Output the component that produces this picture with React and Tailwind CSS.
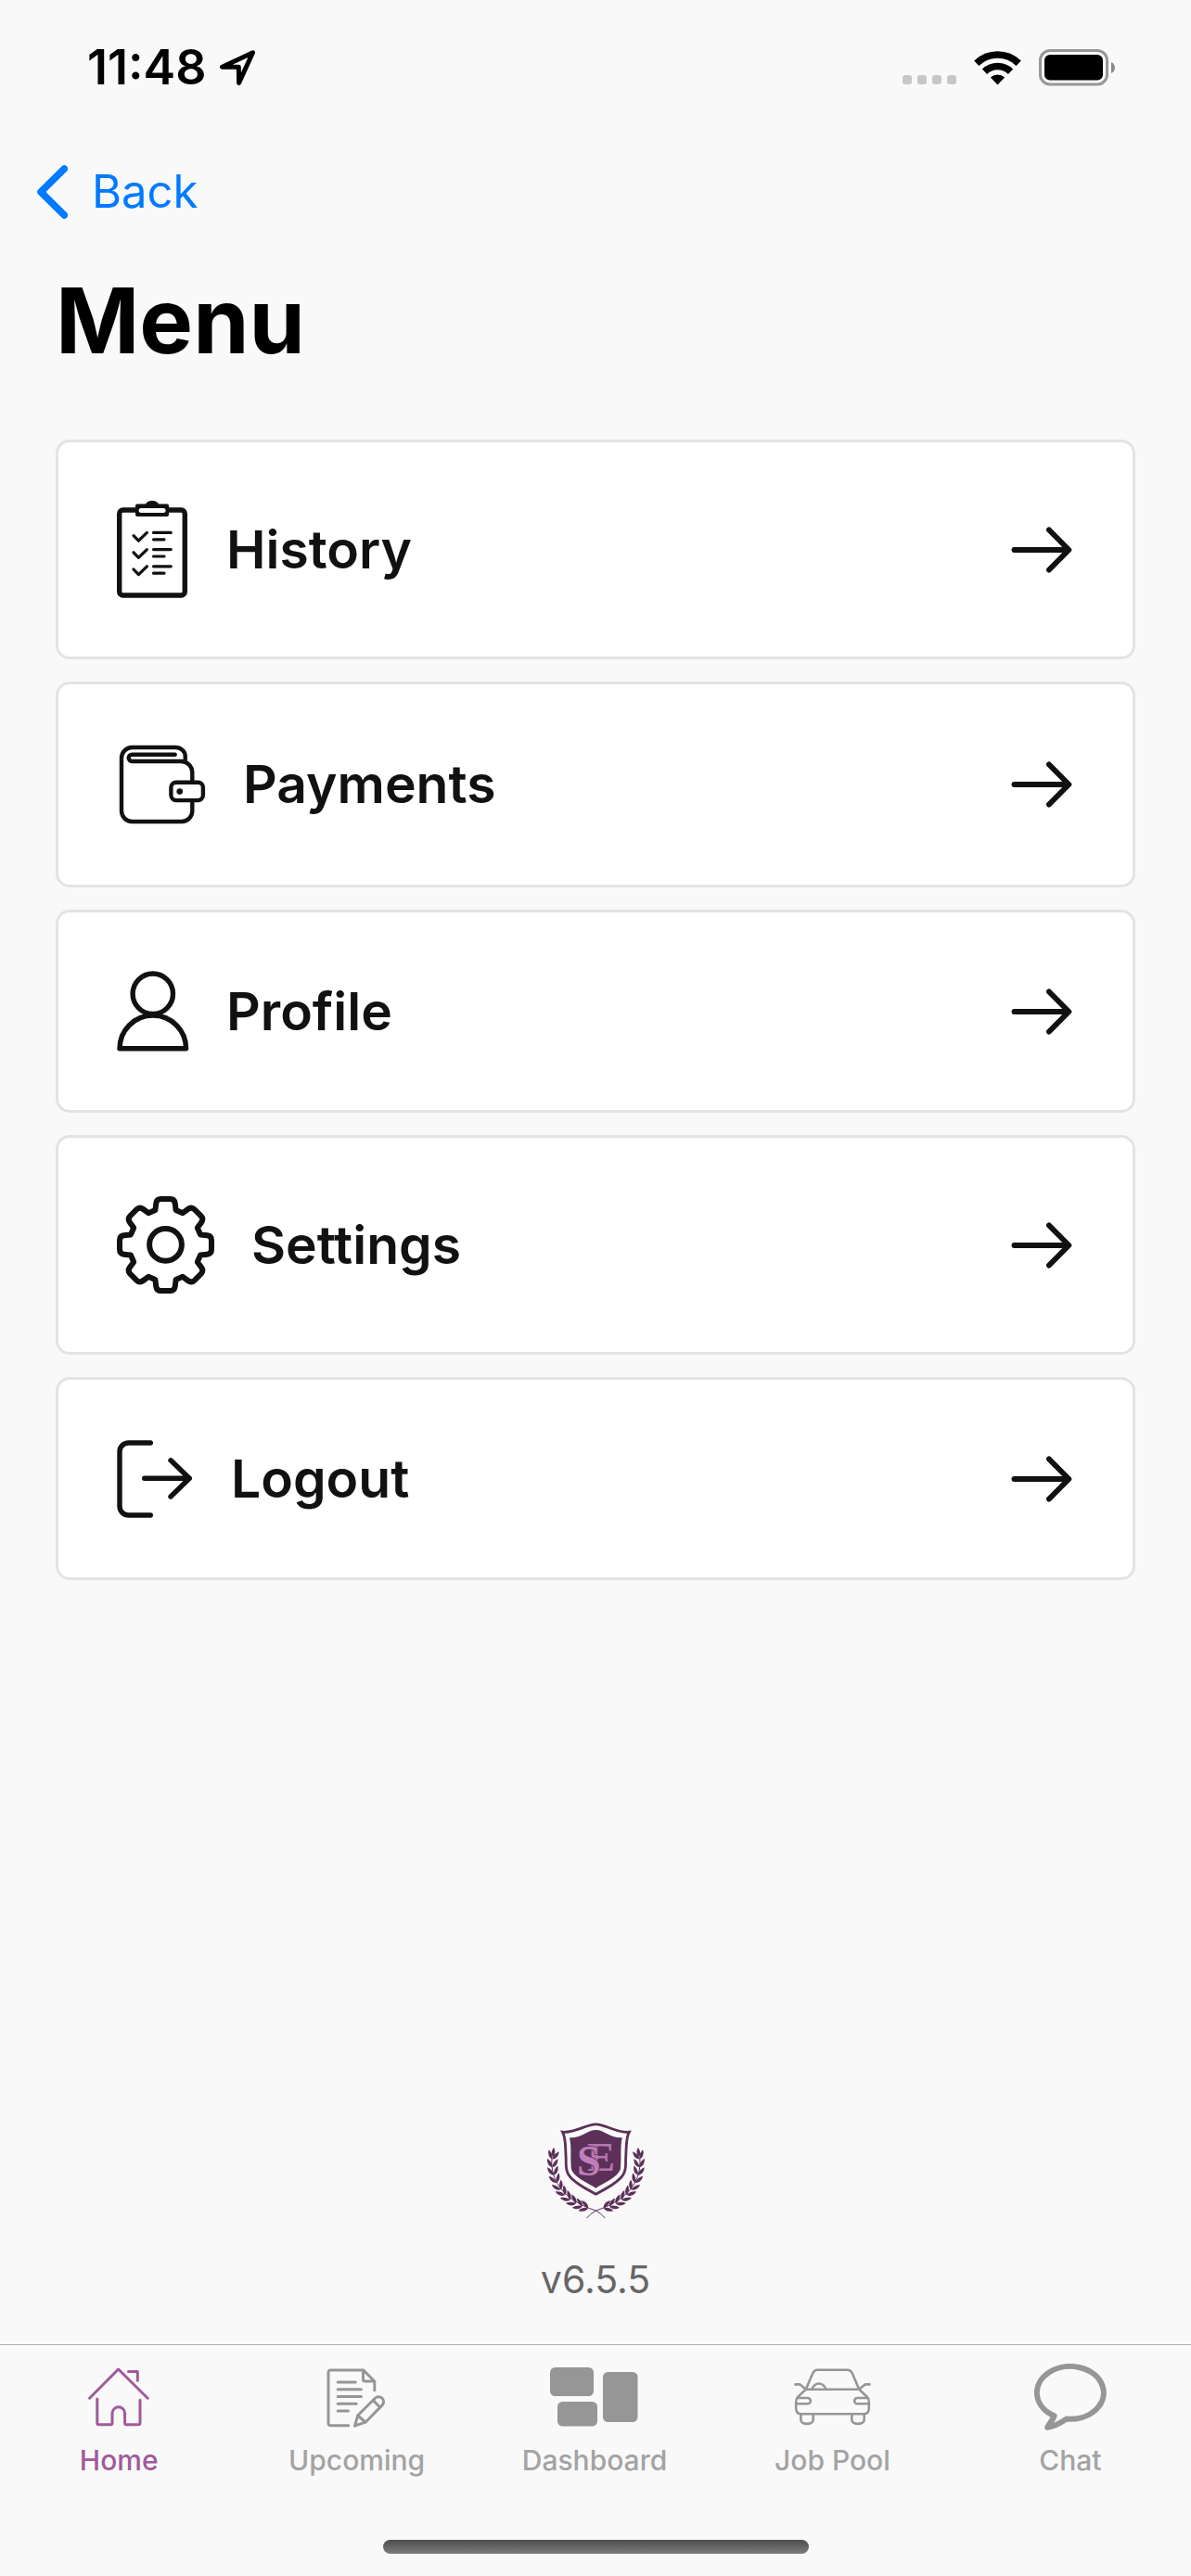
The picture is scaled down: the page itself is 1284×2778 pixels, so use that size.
import { useState } from 'react';

const menuItems = [
  { label: 'History', icon: HistoryIcon },
  { label: 'Payments', icon: PaymentsIcon },
  { label: 'Profile', icon: ProfileIcon },
  { label: 'Settings', icon: SettingsIcon },
  { label: 'Logout', icon: LogoutIcon },
];

const tabs = [
  { label: 'Home', icon: HomeIcon },
  { label: 'Upcoming', icon: UpcomingIcon },
  { label: 'Dashboard', icon: DashboardIcon },
  { label: 'Job Pool', icon: CarIcon },
  { label: 'Chat', icon: ChatIcon },
];

const line = {
  fill: 'none',
  stroke: 'currentColor',
  strokeLinecap: 'round',
  strokeLinejoin: 'round',
};

function HistoryIcon() {
  return (
    <svg width="78" height="105" viewBox="0 0 78 105" {...line} strokeWidth="5.4">
      <rect x="2.7" y="10" width="70.6" height="92" rx="4" />
      <ellipse cx="38" cy="5" rx="7.3" ry="5" fill="currentColor" stroke="none" />
      <rect x="20" y="3.5" width="36" height="13.5" rx="2" fill="currentColor" stroke="none" />
      <rect x="23.6" y="8" width="29" height="5" rx="2.5" fill="#fff" stroke="none" />
      {[0, 18.2, 36.4].map((y) => (
        <g key={y} transform={`translate(0 ${y})`} strokeWidth="3.2">
          <path d="M18 37.6l5.4 5.6 9-8.8" />
          <path d="M39.5 34.4h18.8M39.5 41.8h11.5" />
        </g>
      ))}
    </svg>
  );
}

function PaymentsIcon() {
  return (
    <svg width="96" height="90" viewBox="0 0 96 90" {...line} strokeWidth="4.4">
      <path d="M73.7 18.5V14.5C73.7 9 68.5 5 63 5H16.500A11.5 11.5 0 0 0 5 16.500v57A11.5 11.5 0 0 0 16.5 85h53.3a11.5 11.5 0 0 0 11.5-11.5V62.5" />
      <path d="M62.7 12.7H16.3a3.65 3.65 0 0 0 0 7.3h53.5c6.5.6 11.5 5.5 11.5 12v10" />
      <rect x="58.4" y="42.7" width="34.5" height="19.4" rx="5.5" />
      <circle cx="67.7" cy="52.6" r="3.3" fill="currentColor" stroke="none" />
    </svg>
  );
}

function ProfileIcon() {
  return (
    <svg width="78" height="87" viewBox="0 0 78 87" {...line} strokeWidth="5.4">
      <circle cx="38.8" cy="24.7" r="21.7" />
      <path d="M3 83.8a35.8 35.8 0 0 1 71.6 0z" />
    </svg>
  );
}

function SettingsIcon() {
  return (
    <svg width="105" height="105" viewBox="0 0 105 105" {...line} strokeWidth="6">
      {[0, 90, 180, 270].map((turn) => (
        <path
          key={turn}
          transform={`rotate(${turn} 52.5 52.5)`}
          d="M52.5 3h5c3 0 4.8 1.5 5.2 4.5l.9 7.5 7.4 3.2 5.6-4.2c2.4-1.8 4.9-1.8 7 .2l7.2 7.2c2 2.1 2 4.6.2 7l-4.2 5.6 3.2 7.4 7.5.9c3 .4 4.5 2.2 4.5 5.2v5"
        />
      ))}
      <circle cx="52.5" cy="52.3" r="17.4" />
    </svg>
  );
}

function LogoutIcon() {
  return (
    <svg width="83" height="87" viewBox="0 0 83 87" {...line} strokeWidth="5.4">
      <path d="M36.3 5H12.5A9.5 9.5 0 0 0 3 14.5v59A9.5 9.5 0 0 0 12.5 83h23.8" />
      <path d="M29.7 43.3h48.6M58 23.8l20.2 19.5L58 63" />
    </svg>
  );
}

function ArrowIcon() {
  return (
    <svg width="66" height="50" viewBox="0 0 66 50" {...line} strokeWidth="6">
      <path d="M3.5 25h58.5M41 3.5L62.3 25 41 46.5" />
    </svg>
  );
}

function HomeIcon() {
  return (
    <svg width="66" height="64" viewBox="0 0 66 64" {...line} strokeWidth="3">
      <path d="M1.6 33.2L32.6 2l31.6 31.2" />
      <path d="M9.8 34v26a1.7 1.7 0 0 0 1.7 1.7h12.8a1.7 1.7 0 0 0 1.7-1.7V49.5a6.8 6.8 0 0 1 13.6 0V60a1.7 1.7 0 0 0 1.7 1.7H54a2 2 0 0 0 2-2V35.3" />
      <path d="M43.5 4.4h9.8v9.8" />
    </svg>
  );
}

function UpcomingIcon() {
  return (
    <svg width="66" height="65" viewBox="0 0 66 65" {...line} strokeWidth="3">
      <path d="M23.7 62.7H4.2A2.2 2.2 0 0 1 2 60.5V5.2A2.2 2.2 0 0 1 4.2 3h35.6l12 12v9.7" />
      <path d="M39.5 3v10a2 2 0 0 0 2 2h10" />
      <path d="M12.2 16h19M12.2 23.7h25.2M12.2 31.4h25.2M12.2 39.2h20M12.2 47h11.2" />
      <path d="M30.4 63.2l3.4-11.4 18.6-18.5a5.3 5.3 0 0 1 7.6 7.6L42 59.2z" />
      <path d="M50.4 35.6l7.4 7.6M33.8 52l8 7" />
    </svg>
  );
}

function DashboardIcon() {
  return (
    <svg width="95" height="64" viewBox="0 0 95 64" fill="currentColor">
      <rect x="0" y="0" width="47" height="31" rx="5.5" />
      <rect x="8" y="37" width="43" height="26.5" rx="5.5" />
      <rect x="57" y="5" width="37.5" height="54" rx="5.5" />
    </svg>
  );
}

function CarIcon() {
  return (
    <svg width="83" height="62" viewBox="0 0 83 62" {...line} strokeWidth="2.6">
      <path d="M12.8 22.8l7-16.6C21.2 3 23 1.8 25.5 1.8h32c2.5 0 4.3 1.2 5.7 4.4l7 16.6z" />
      <path d="M12.8 22.8l-8.3 7.7C3 32 2.2 33.3 2.2 36v7.3c0 3.8 2 6 5.8 6h67c3.8 0 5.8-2.2 5.8-6V36c0-2.7-.8-4-2.3-5.5l-8.3-7.7" />
      <path d="M1.5 17.4h5L12 22M81.5 17.4h-5L71 22" />
      <path d="M19.5 22.3c3-7.8 11.5-7.8 14.8 0" />
      <path d="M3.5 32h11.2a3.1 3.1 0 0 1 0 6.3H2.5M79.5 32H68.3a3.1 3.1 0 0 0 0 6.3h12.2" />
      <path d="M7.3 49.5v6c0 5.8 13.4 5.8 13.4 0v-6M62.3 49.5v6c0 5.8 13.4 5.8 13.4 0v-6" />
    </svg>
  );
}

function ChatIcon() {
  return (
    <svg width="78" height="72" viewBox="0 0 78 72" {...line} strokeWidth="6">
      <path d="M35 59.6A36 28.4 0 1 0 21.6 56.3c-1 4-5.6 8.4-7.4 12.4 6-.4 14.4-4.8 20.8-9.1z" />
    </svg>
  );
}

// Leaves sit in pairs along one side of the wreath
const leafAngles = [-4, 6, 16, 26, 36, 45, 54, 63, 72, 80];

function Branch() {
  return (
    <g>
      <path
        d="M7 40C5 62 18 84 54.3 96q6 3 10 8"
        fill="none"
        stroke="#5c3058"
        strokeWidth="1"
      />
      <path d="M0 0C-2.8-3-2-7 0-10 2-7 2.8-3 0 0z" transform="translate(8 38) rotate(6)" />
      {leafAngles.map((angle) => {
        const a = (angle * Math.PI) / 180;
        const x = 54.3 - 47 * Math.cos(a);
        const y = 44 + 50 * Math.sin(a);
        return (
          <g key={angle} transform={`translate(${x} ${y}) rotate(${-angle})`}>
            <path d="M0 0C-3.2-3-2.6-7.500 0-11 2-7 2-3 0 0z" transform="rotate(-24)" />
            <path d="M0 0C-2-3-2-7 0-11 2.6-7.500 3.2-3 0 0z" transform="rotate(38)" />
          </g>
        );
      })}
    </g>
  );
}

function Crest() {
  return (
    <svg width="109" height="106" viewBox="0 0 109 106" fill="#5c3058" role="img" aria-label="SE">
      <Branch />
      <g transform="translate(108.8 0) scale(-1 1)">
        <Branch />
      </g>
      <path
        d="M18.5 11.2C32 12.5 44 2.8 54.4 2.8S77 12.5 90.3 11.2C86.5 18 87.5 26 86.6 40c-.3 6 1 11-2.6 17-5 8-18 15-29.6 21.2C42.8 72 29.8 65 24.8 57c-3.6-6-2.3-11-2.6-17-.9-14 .1-22-3.7-28.8z"
        fill="#f9f9f9"
        stroke="#5c3058"
        strokeWidth="2.8"
      />
      <path d="M26 17.2C38 18.5 45 9 54.4 9s16.4 9.5 28.4 8.200C80.5 26 82 38 81 50c-1 9-17 15.500-26.600 21.700C44.800 65.500 28.800 59 27.800 50c-1-12 .5-24-1.800-32.800z" />
      <text x="45" y="53" fontSize="45" fontFamily="Liberation Serif, serif" fontWeight="700" fill="#b576b0">
        E
      </text>
      <text
        x="34"
        y="58"
        fontSize="46"
        fontFamily="Liberation Serif, serif"
        fontWeight="700"
        fill="#c07fbb"
        stroke="#5c3058"
        strokeWidth="1.6"
        paintOrder="stroke"
      >
        S
      </text>
    </svg>
  );
}

function StatusBar() {
  return (
    <div className="flex h-[146px] items-center justify-between pr-[82px] pl-[94px] text-black">
      <div className="flex items-center gap-[14px]">
        <span className="text-[52px] leading-[60px] font-semibold">11:48</span>
        <svg width="40" height="40" viewBox="0 0 40 40" {...line} strokeWidth="5">
          <path d="M36.5 3.8L3.5 19.2h17.8l.3 17.2z" />
        </svg>
      </div>
      <div className="flex items-center gap-[19px]">
        <svg width="58" height="38" viewBox="0 0 58 38" fill="#c7c7c7">
          {[0, 16, 32, 48].map((x) => (
            <rect key={x} x={x} y="27" width="10" height="10" rx="3" />
          ))}
        </svg>
        <svg width="51" height="38" viewBox="0 0 51 38" fill="none" stroke="#000" strokeWidth="7.5">
          <path d="M2.8 14.3a32.5 32.5 0 0 1 45.4 0" />
          <path d="M11.5 23.2a20 20 0 0 1 28 0" />
          <path d="M25.5 37.5l-7.6-7.9a11 11 0 0 1 15.2 0z" fill="#000" stroke="none" />
        </svg>
        <svg width="82" height="40" viewBox="0 0 82 40">
          <rect x="1.5" y="1.5" width="72" height="36.5" rx="10.5" fill="none" stroke="#979797" strokeWidth="3" />
          <rect x="6" y="6" width="63" height="27.5" rx="6" />
          <path d="M78 14c5.3 2 5.3 10 0 12z" fill="#8a8a8a" />
        </svg>
      </div>
    </div>
  );
}

function App() {
  const [activeTab, setActiveTab] = useState('Home');

  return (
    <div className="flex min-h-screen flex-col bg-[#f9f9f9] font-['Inter',sans-serif] text-[#111]">
      <StatusBar />

      <div className="flex h-[122px] items-center px-10">
        <button type="button" className="flex items-center gap-[26px] text-[49px] leading-[60px] text-[#007aff]">
          <svg width="33" height="58" viewBox="0 0 33 58" {...line} strokeWidth="7.5">
            <path d="M29.3 4L4 29l25.3 25" />
          </svg>
          Back
        </button>
      </div>

      <main className="flex flex-1 flex-col px-[60px] pt-[18px]">
        <h1 className="text-[97px] leading-[120px] font-bold text-black">Menu</h1>

        <ul className="mt-[68px] flex flex-col gap-6">
          {menuItems.map(({ label, icon: Icon }) => (
            <li key={label}>
              <button
                type="button"
                className="flex w-full items-center gap-10 rounded-[15px] border-[3px] border-[#e3e3e3] bg-white py-[63px] pr-[65px] pl-[63px] text-left"
              >
                <Icon />
                <span className="flex-1 text-[57px] leading-[72px] font-semibold">{label}</span>
                <ArrowIcon />
              </button>
            </li>
          ))}
        </ul>

        <div className="mt-auto flex flex-col items-center gap-[34px] pb-10">
          <Crest />
          <p className="text-[41px] leading-[60px] text-[#666]">v6.5.5</p>
        </div>
      </main>

      <footer className="border-t border-[#b0b0b0] pt-[22px] pb-6">
        <nav className="grid grid-cols-5 pr-0.5">
          {tabs.map(({ label, icon: Icon }) => (
            <a
              key={label}
              href="#"
              onClick={() => setActiveTab(label)}
              className={`flex flex-col items-center gap-[14px] ${activeTab === label ? 'text-[#a05a9a]' : 'text-[#969696]'}`}
            >
              <span className="flex h-[68px] items-center">
                <Icon />
              </span>
              <span
                className={`text-[30px] leading-[40px] font-medium ${activeTab === label ? 'text-[#a05a9a]' : 'text-[#a3a3a3]'}`}
              >
                {label}
              </span>
            </a>
          ))}
        </nav>
        <div className="mx-auto mt-[66px] h-[15px] w-[459px] rounded-full bg-linear-to-b from-[#4d4d4d] to-[#7d7d7d]" />
      </footer>
    </div>
  );
}

export default App;
